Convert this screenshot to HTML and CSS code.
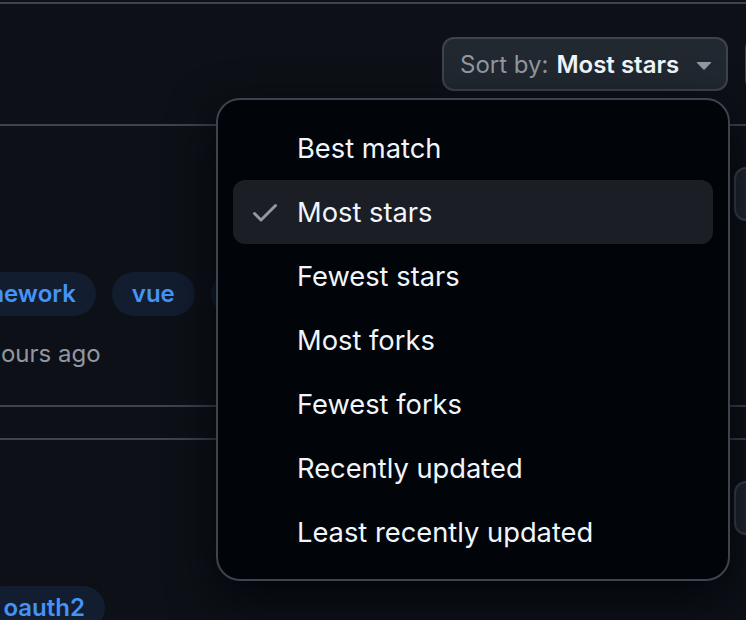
FILE: index.html
```html
<!DOCTYPE html>
<html lang="en">

<head>
    <meta charset="UTF-8" />
    <meta name="viewport" content="width=device-width, initial-scale=1.0" />
    <title>Repository search</title>
    <link rel="stylesheet" href="styles.css">
</head>

<body>
    <div class="page">
        <div class="search-header"></div>

        <div class="toolbar">
            <span class="result-count">2.1k results</span>
            <div class="sort-menu">
                <button class="btn sort-btn" type="button">
                    <span class="sort-label">Sort by:</span>
                    <span class="sort-value">Most stars</span>
                    <svg class="caret" viewBox="0 0 16 16" width="32" height="32" aria-hidden="true">
                        <path d="m4.427 7.427 3.396 3.396a.25.25 0 0 0 .354 0l3.396-3.396A.25.25 0 0 0 11.396 7H4.604a.25.25 0 0 0-.177.427Z"></path>
                    </svg>
                </button>

                <!-- open sort dropdown -->
                <ul class="dropdown">
                    <li class="dropdown-item"><span class="item-check"></span>Best match</li>
                    <li class="dropdown-item selected">
                        <span class="item-check">
                            <svg viewBox="0 0 16 16" width="32" height="32" aria-hidden="true">
                                <path d="M13.78 4.22a.75.75 0 0 1 0 1.06l-7.25 7.25a.75.75 0 0 1-1.06 0L2.22 9.28a.751.751 0 0 1 .018-1.042.751.751 0 0 1 1.042-.018L6 10.94l6.72-6.72a.75.75 0 0 1 1.06 0Z"></path>
                            </svg>
                        </span>Most stars
                    </li>
                    <li class="dropdown-item"><span class="item-check"></span>Fewest stars</li>
                    <li class="dropdown-item"><span class="item-check"></span>Most forks</li>
                    <li class="dropdown-item"><span class="item-check"></span>Fewest forks</li>
                    <li class="dropdown-item"><span class="item-check"></span>Recently updated</li>
                    <li class="dropdown-item"><span class="item-check"></span>Least recently updated</li>
                </ul>
            </div>
            <button class="btn view-btn" type="button">View</button>
        </div>

        <div class="results">
            <div class="result">
                <div class="result-main">
                    <div class="result-title">vuejs/core</div>
                    <div class="tags">
                        <span class="tag">javascript</span>
                        <span class="tag">framework</span>
                        <span class="tag">vue</span>
                        <span class="tag">frontend</span>
                    </div>
                    <div class="meta">
                        <span class="meta-item"><span class="lang-dot"></span>Vue</span>
                        <span class="meta-item">Updated 4 hours ago</span>
                    </div>
                </div>
                <div class="result-actions">
                    <button class="btn star-btn" type="button">
                        <svg viewBox="0 0 16 16" width="32" height="32" aria-hidden="true">
                            <path d="M8 .25a.75.75 0 0 1 .673.418l1.882 3.815 4.21.612a.75.75 0 0 1 .416 1.279l-3.046 2.97.719 4.192a.751.751 0 0 1-1.088.791L8 12.347l-3.766 1.98a.75.75 0 0 1-1.088-.79l.72-4.194L.818 6.374a.75.75 0 0 1 .416-1.28l4.21-.611L7.327.668A.75.75 0 0 1 8 .25Z"></path>
                        </svg>
                        Star
                    </button>
                </div>
            </div>

            <div class="result">
                <div class="result-main">
                    <div class="result-title">spring/security</div>
                    <div class="tags">
                        <span class="tag">authentication</span>
                        <span class="tag">oauth2</span>
                    </div>
                </div>
                <div class="result-actions">
                    <button class="btn star-btn" type="button">
                        <svg viewBox="0 0 16 16" width="32" height="32" aria-hidden="true">
                            <path d="M8 .25a.75.75 0 0 1 .673.418l1.882 3.815 4.21.612a.75.75 0 0 1 .416 1.279l-3.046 2.97.719 4.192a.751.751 0 0 1-1.088.791L8 12.347l-3.766 1.98a.75.75 0 0 1-1.088-.79l.72-4.194L.818 6.374a.75.75 0 0 1 .416-1.28l4.21-.611L7.327.668A.75.75 0 0 1 8 .25Z"></path>
                        </svg>
                        Star
                    </button>
                </div>
            </div>
        </div>
    </div>
</body>

</html>
```

FILE: styles.css
```css
:root {
    --bg: #0d1117;
    --overlay-bg: #010409;
    --btn-bg: #212830;
    --border: #3d444d;
    --fg: #f0f6fc;
    --muted: #9198a1;
    --accent: #4493f8;
    --accent-bg: #121d2f;
    --selected-bg: #1b1f25;
}

* {
    box-sizing: border-box;
}

body {
    margin: 0;
    height: 620px;
    overflow: hidden;
    background: var(--bg);
    color: var(--fg);
    font-family: Inter, "Noto Sans", sans-serif;
}

/* the frame is a crop of a wider page */
.page {
    width: 1100px;
    margin-left: -264px;
}

.search-header {
    height: 4px;
    border-bottom: 2px solid var(--border);
}

.toolbar {
    display: flex;
    align-items: center;
    gap: 17px;
    margin-top: 33px;
    padding: 0 20px 0 24px;
}

.result-count {
    flex: 1;
    font-size: 28px;
    color: transparent;
}

.btn {
    display: flex;
    align-items: center;
    flex-shrink: 0;
    height: 54px;
    padding: 0 16px;
    border: 2px solid var(--border);
    border-radius: 12px;
    background: var(--btn-bg);
    color: var(--fg);
    font-family: inherit;
    font-size: 24px;
    font-weight: 600;
}

.sort-menu {
    position: relative;
}

.sort-btn {
    padding-right: 6px;
    width: 286px;
}

.sort-label {
    color: var(--muted);
    font-weight: 400;
    margin-right: 8px;
}

.caret {
    margin-left: auto;
    fill: var(--muted);
}

.view-btn {
    width: 71px;
}

.dropdown {
    position: absolute;
    top: calc(100% + 7px);
    right: -2px;
    z-index: 10;
    width: 514px;
    margin: 0;
    padding: 16px 15px 15px;
    list-style: none;
    background: var(--overlay-bg);
    border: 2px solid var(--border);
    border-radius: 24px;
    box-shadow: 0 16px 48px rgba(1, 4, 9, 0.85);
}

.dropdown-item {
    display: flex;
    align-items: center;
    gap: 16px;
    height: 64px;
    padding: 0 16px;
    border-radius: 12px;
    font-size: 27.3px;
    color: var(--fg);
}

.dropdown-item.selected {
    background: var(--selected-bg);
}

.item-check {
    display: flex;
    width: 32px;
    height: 32px;
}

.item-check svg {
    fill: var(--muted);
}

.results {
    margin-top: 33px;
}

.result {
    display: flex;
    gap: 16px;
    padding: 41px 24px 33px;
    border-top: 2px solid var(--border);
    border-bottom: 2px solid var(--border);
}

.result + .result {
    margin-top: 31px;
}

.result-main {
    flex: 0 0 958px;
}

.result-title {
    height: 42px;
    font-size: 28px;
    font-weight: 600;
    color: var(--accent);
}

.tags {
    display: flex;
    gap: 16px;
    margin-top: 63px;
}

.tag {
    height: 44px;
    padding: 0 20px;
    border-radius: 22px;
    background: var(--accent-bg);
    color: var(--accent);
    font-size: 24px;
    font-weight: 600;
    line-height: 44px;
}

.meta {
    display: flex;
    gap: 28px;
    margin-top: 20px;
    font-size: 24px;
    line-height: 36px;
    color: var(--muted);
}

.meta-item {
    display: flex;
    align-items: center;
    gap: 8px;
}

.lang-dot {
    width: 20px;
    height: 20px;
    border-radius: 50%;
    background: #41b883;
}

.star-btn {
    gap: 8px;
}

.star-btn svg {
    fill: var(--muted);
}
```
